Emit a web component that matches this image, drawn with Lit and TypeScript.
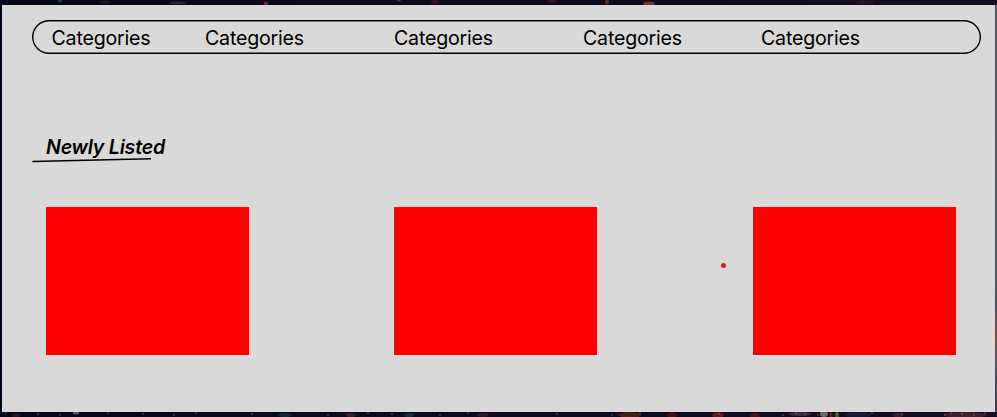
import { LitElement, html, svg, css } from "lit";
import { customElement } from "lit/decorators.js";

// x, y, rx, ry, colour of the faint lights in the backdrop
const lights: [number, number, number, number, string][] = [
  [60, 1, 2, 1.5, "#17505a"],
  [105, 2, 5, 1.5, "#301523"],
  [178, 3, 9, 1.5, "#35283d"],
  [266, 3.5, 2.4, 2, "#87312b"],
  [399, 0, 2, 1.5, "#405060"],
  [435, 2, 4, 2, "#401425"],
  [552, 1, 5, 2, "#3b1228"],
  [607, 2, 2, 2.5, "#70391d"],
  [649, 3.5, 6, 2, "#963b31"],
  [865, 2, 9, 2, "#32172b"],
  [16, 415, 5, 2, "#35141f"],
  [76, 413, 3, 1.5, "#796976"],
  [285, 415, 7, 2, "#123039"],
  [351, 415, 5, 2, "#49202b"],
  [409, 415, 5, 2, "#183840"],
  [483, 415, 6, 2, "#391527"],
  [630, 415, 11, 3, "#5d211b"],
  [672, 415, 5, 3, "#521616"],
  [718, 415, 6, 3, "#6a2020"],
  [755, 416, 5, 3, "#501c1b"],
  [800, 414, 12, 2, "#493342"],
  [824, 414, 4, 3, "#85817c"],
  [831, 415, 1.5, 3, "#7b251c"],
  [837, 415, 2, 3, "#52702e"],
  [858, 415, 13, 3, "#181d3c"],
  [898, 415, 6, 2, "#49242e"],
  [965, 415, 22, 3, "#4a2535"],
];

const stars = [6, 38, 60, 108, 143, 174, 196, 252, 328, 368, 392, 440, 468, 557, 612, 640, 719, 783, 796, 805, 818, 872, 902, 945, 951, 962, 974, 985];

@customElement("app-root")
class AppRoot extends LitElement {
  static styles = css`
    :host {
      display: block;
      box-sizing: border-box;
      width: 100%;
      height: 417px;
      overflow: hidden;
      padding: 5px 2px 5.5px;
      font-family: Inter, "Liberation Sans", sans-serif;
      color: #000;
      position: relative;
      background: linear-gradient(90deg, #030618, #0b0919 20%, #0c0a1c 60%, #160c20);
    }
    .backdrop {
      position: absolute;
      inset: 0;
    }
    .panel {
      position: relative;
      box-sizing: border-box;
      height: 406.5px;
      width: 993px;
      background: #d9d9d9;
      padding: 15px 14.5px 0 30px;
    }
    .nav {
      box-sizing: border-box;
      display: grid;
      grid-template-columns: 153.5px 189px 189px 178px auto;
      align-items: center;
      height: 34px;
      padding: 1px 0 0 19.5px;
      box-shadow: inset 0 0 0 1.4px #000;
      border-radius: 17px;
      font-size: 19.6px;
      letter-spacing: -0.2px;
      line-height: 24px;
    }
    .heading {
      margin: 81px 0 0 14px;
      font-size: 19.6px;
      letter-spacing: -0.23px;
      line-height: 24px;
      font-weight: 600;
      font-style: italic;
    }
    .rule {
      display: block;
      margin-top: -2px;
    }
    .cards {
      display: flex;
      margin: 44px 0 0 14px;
    }
    .card {
      width: 202.7px;
      height: 148px;
      background: #f00;
    }
    .card:nth-child(2) { margin-left: 145.3px; }
    .card:nth-child(3) { margin-left: 156.3px; }
    .dot {
      position: absolute;
      left: 718.5px;
      top: 257.5px;
      width: 5px;
      height: 5px;
      border-radius: 50%;
      background: #dc1c1c;
    }
  `;

  render() {
    return html`
      <svg class="backdrop" width="997" height="417" viewBox="0 0 997 417">
        <defs>
          <linearGradient id="edge" x1="0" y1="0" x2="0" y2="1">
            <stop offset="0" stop-color="#59585f" />
            <stop offset="0.6" stop-color="#54565d" />
            <stop offset="0.75" stop-color="#505159" />
            <stop offset="0.81" stop-color="#87474a" />
            <stop offset="0.87" stop-color="#5a5861" />
            <stop offset="1" stop-color="#403b48" />
          </linearGradient>
        </defs>
        ${lights.map(([x, y, rx, ry, fill]) => svg`<ellipse cx=${x} cy=${y} rx=${rx} ry=${ry} fill=${fill} opacity="0.8" />`)}
        ${stars.map((x, i) => svg`<circle cx=${x} cy=${413 + (i % 3)} r="0.8" fill="#8d8491" opacity="0.7" />`)}
        <rect x="995" y="5" width="2" height="407" fill="url(#edge)" />
      </svg>
      <main class="panel">
        <nav class="nav">
          ${Array.from({ length: 5 }, () => html`<span>Categories</span>`)}
        </nav>
        <h2 class="heading">Newly Listed</h2>
        <svg class="rule" width="120" height="6" viewBox="0 0 120 6">
          <path d="M0.5 4.5L119 1.7" stroke="#000" stroke-width="1.4" fill="none" />
        </svg>
        <section class="cards">
          <div class="card"></div>
          <div class="card"></div>
          <div class="card"></div>
        </section>
        <span class="dot"></span>
      </main>
    `;
  }
}
